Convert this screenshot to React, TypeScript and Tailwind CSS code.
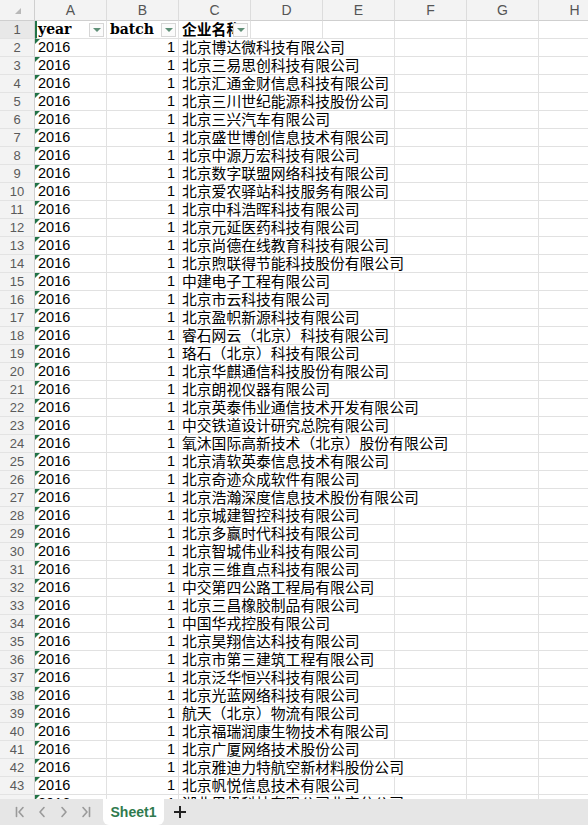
import React from "react";

// Sheet data
const NAMES: string[] = [
  "北京博达微科技有限公司",
  "北京三易思创科技有限公司",
  "北京汇通金财信息科技有限公司",
  "北京三川世纪能源科技股份公司",
  "北京三兴汽车有限公司",
  "北京盛世博创信息技术有限公司",
  "北京中源万宏科技有限公司",
  "北京数字联盟网络科技有限公司",
  "北京爱农驿站科技服务有限公司",
  "北京中科浩晖科技有限公司",
  "北京元延医药科技有限公司",
  "北京尚德在线教育科技有限公司",
  "北京煦联得节能科技股份有限公司",
  "中建电子工程有限公司",
  "北京市云科技有限公司",
  "北京盈帜新源科技有限公司",
  "睿石网云（北京）科技有限公司",
  "珞石（北京）科技有限公司",
  "北京华麒通信科技股份有限公司",
  "北京朗视仪器有限公司",
  "北京英泰伟业通信技术开发有限公司",
  "中交铁道设计研究总院有限公司",
  "氧沐国际高新技术（北京）股份有限公司",
  "北京清软英泰信息技术有限公司",
  "北京奇迹众成软件有限公司",
  "北京浩瀚深度信息技术股份有限公司",
  "北京城建智控科技有限公司",
  "北京多赢时代科技有限公司",
  "北京智城伟业科技有限公司",
  "北京三维直点科技有限公司",
  "中交第四公路工程局有限公司",
  "北京三昌橡胶制品有限公司",
  "中国华戎控股有限公司",
  "北京昊翔信达科技有限公司",
  "北京市第三建筑工程有限公司",
  "北京泛华恒兴科技有限公司",
  "北京光蓝网络科技有限公司",
  "航天（北京）物流有限公司",
  "北京福瑞润康生物技术有限公司",
  "北京广厦网络技术股份公司",
  "北京雅迪力特航空新材料股份公司",
  "北京帆悦信息技术有限公司",
  "湖北思极科技有限公司北京分公司",
];

const LETTERS = ["A", "B", "C", "D", "E", "F", "G", "H"];
const CJK = "font-['Noto_Sans_CJK_SC',sans-serif]";
const SANS = "font-['Liberation_Sans','Noto_Sans_CJK_SC',sans-serif]";

function RowHead({ n, active }: { n: number; active?: boolean }) {
  return (
    <div
      className={`w-[35px] shrink-0 flex items-center justify-center border-r border-b border-r-[#cfcfcf] border-b-[#e3e3e3] text-[13px] text-[#5a5a5a] ${SANS} ${
        active ? "bg-[#e8e8e8]" : "bg-[#f3f3f3]"
      }`}
    >
      {n}
    </div>
  );
}

function FilterButton() {
  return (
    <div className="absolute right-[2px] top-1/2 -translate-y-1/2 w-[15px] h-[14px] bg-[#fbfbfb] border border-[#d6d6d6] flex items-center justify-center">
      <div className="w-0 h-0 border-l-[4px] border-r-[4px] border-t-[4px] border-l-transparent border-r-transparent border-t-[#5f8f77]" />
    </div>
  );
}

function EmptyCell() {
  return <div className="w-[72px] shrink-0 border-r border-b border-[#e1e1e1]" />;
}

function HeaderRow() {
  return (
    <div className="flex h-[21px] shrink-0">
      <div className="w-[35px] shrink-0 relative bg-[#f3f3f3] border-r border-b border-[#cfcfcf]">
        <div className="absolute right-[13px] bottom-[6px] w-0 h-0 border-l-[6px] border-b-[6px] border-l-transparent border-b-[#b8b8b8]" />
      </div>
      {LETTERS.map((l) => (
        <div
          key={l}
          className={`w-[72px] shrink-0 flex items-center justify-center bg-[#f3f3f3] border-r border-b border-r-[#dcdcdc] border-b-[#cfcfcf] text-[14px] text-[#555] ${SANS}`}
        >
          {l}
        </div>
      ))}
    </div>
  );
}

function TitleRow() {
  const serif = "font-['DejaVu_Serif',serif] font-bold text-[14px] text-black";
  return (
    <div className="flex h-[18px] shrink-0">
      <RowHead n={1} active />
      <div className="relative w-[72px] shrink-0 border-r border-b border-[#e1e1e1] border-l-2 border-l-[#217346] flex items-center pl-[1px]">
        <span className={serif}>year</span>
        <FilterButton />
      </div>
      <div className="relative w-[72px] shrink-0 border-r border-b border-[#e1e1e1] flex items-center pl-[3px]">
        <span className={serif}>batch</span>
        <FilterButton />
      </div>
      <div className="relative w-[72px] shrink-0 border-r border-b border-[#e1e1e1] flex items-center pl-[3px] overflow-hidden">
        <span className={`${CJK} font-bold text-[14.8px] whitespace-nowrap text-black`}>企业名称</span>
        <FilterButton />
      </div>
      {LETTERS.slice(3).map((l) => (
        <EmptyCell key={l} />
      ))}
    </div>
  );
}

function DataRow({ n, name }: { n: number; name: string }) {
  const textW = 3 + name.length * 14.8 + 2;
  const span = Math.min(6, Math.max(1, Math.ceil(textW / 72)));
  return (
    <div className="flex h-[18px] shrink-0">
      <RowHead n={n} />
      <div
        className={`relative w-[72px] shrink-0 border-r border-b border-[#e1e1e1] flex items-center pl-[3px] text-[14.5px] text-black ${SANS}`}
      >
        <div className="absolute left-0 top-0 w-0 h-0 border-t-[5px] border-r-[5px] border-t-[#217346] border-r-transparent" />
        2016
      </div>
      <div
        className={`w-[72px] shrink-0 border-r border-b border-[#e1e1e1] flex items-center justify-end pr-[3px] text-[14.5px] text-black ${SANS}`}
      >
        1
      </div>
      <div
        style={{ width: span * 72 }}
        className={`shrink-0 border-r border-b border-[#e1e1e1] flex items-center pl-[3px] whitespace-nowrap text-[14.8px] text-black ${CJK}`}
      >
        {name}
      </div>
      {Array.from({ length: 5 - (span - 1) }).map((_, i) => (
        <EmptyCell key={i} />
      ))}
    </div>
  );
}

function NavIcon({ kind }: { kind: "first" | "prev" | "next" | "last" }) {
  return (
    <svg width="12" height="12" viewBox="0 0 12 12" fill="none" stroke="#9a9a9a" strokeWidth="1.6" strokeLinecap="round" strokeLinejoin="round">
      {kind === "first" && (
        <>
          <path d="M2.5 1.5v9" />
          <path d="M9 1.5L5 6l4 4.5" />
        </>
      )}
      {kind === "prev" && <path d="M8 1.5L4 6l4 4.5" />}
      {kind === "next" && <path d="M4 1.5L8 6l-4 4.5" />}
      {kind === "last" && (
        <>
          <path d="M9.5 1.5v9" />
          <path d="M3 1.5L7 6l-4 4.5" />
        </>
      )}
    </svg>
  );
}

function SheetTabs() {
  return (
    <div className="h-[26px] shrink-0 bg-[#e6e6e6] flex items-stretch">
      <div className="flex items-center pl-[14px] gap-[10px] w-[103px]">
        <NavIcon kind="first" />
        <NavIcon kind="prev" />
        <NavIcon kind="next" />
        <NavIcon kind="last" />
      </div>
      <div className={`w-[61px] bg-white rounded-b-[6px] flex items-center justify-center text-[14px] font-bold text-[#2f7a4e] ${SANS}`}>
        Sheet1
      </div>
      <div className="flex items-center pl-[9px]">
        <svg width="14" height="14" viewBox="0 0 14 14" stroke="#222" strokeWidth="2">
          <path d="M7 1v12M1 7h12" />
        </svg>
      </div>
    </div>
  );
}

export default function App() {
  return (
    <div className="w-[588px] h-[825px] flex flex-col bg-white overflow-hidden">
      <div className="flex-1 min-h-0 overflow-hidden flex flex-col">
        <HeaderRow />
        <TitleRow />
        {NAMES.map((name, i) => (
          <DataRow key={i} n={i + 2} name={name} />
        ))}
      </div>
      <SheetTabs />
    </div>
  );
}
